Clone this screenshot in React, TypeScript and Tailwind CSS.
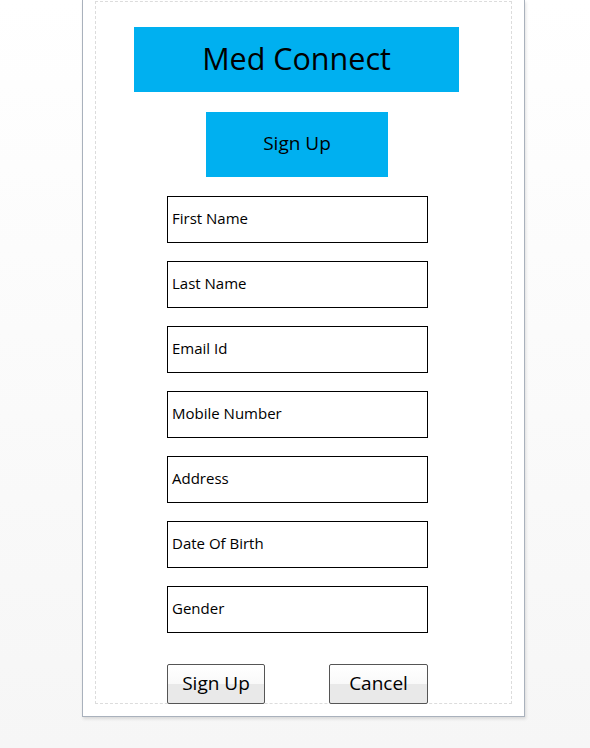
import React from 'react';

const FIELDS = ['First Name', 'Last Name', 'Email Id', 'Mobile Number', 'Address', 'Date Of Birth', 'Gender'];

const font = "font-['Segoe_UI','Open_Sans','Noto_Sans',sans-serif]";

export default function App() {
  return (
    <div className={`min-h-[748px] w-[590px] bg-gradient-to-b from-white to-[#f6f6f6] ${font}`}>
      {/* device frame */}
      <div className="ml-[82px] h-[717px] w-[443px] border-x border-b border-[#a9b1bc] bg-white px-[12px] pt-[1px] shadow-[1px_2px_3px_rgba(0,0,0,0.12)]">
        <div className="h-[703px] w-[417px] border border-dashed border-[#dcdcdc]">
          <div className="flex flex-col pt-[25px]">
            <div className="ml-[38px] flex h-[65px] w-[325px] items-center justify-center bg-[#00b0f0] pb-[2px] text-[30.5px] text-black">
              Med Connect
            </div>
            <div className="ml-[110px] mt-[20px] flex h-[65px] w-[182px] items-center justify-center bg-[#00b0f0] pb-[2px] text-[19px] text-black">
              Sign Up
            </div>
            <div className="ml-[71px] mt-[19px] flex flex-col gap-[18px]">
              {FIELDS.map((f) => (
                <div
                  key={f}
                  className="flex h-[47px] w-[261px] items-center border border-black pb-[2px] pl-[4px] text-[15px] text-black"
                >
                  {f}
                </div>
              ))}
            </div>
            <div className="ml-[71px] mt-[31px] flex gap-[64px]">
              <button className="h-[40px] w-[98px] rounded-[2px] border border-[#555] bg-[linear-gradient(to_bottom,#ffffff_0%,#f9f9f9_50%,#e9e9e9_50%,#e9e9e9_100%)] pb-[2px] text-[19px] text-black">
                Sign Up
              </button>
              <button className="h-[40px] w-[99px] rounded-[2px] border border-[#555] bg-[linear-gradient(to_bottom,#ffffff_0%,#f9f9f9_50%,#e9e9e9_50%,#e9e9e9_100%)] pb-[2px] text-[19px] text-black">
                Cancel
              </button>
            </div>
          </div>
        </div>
      </div>
    </div>
  );
}
